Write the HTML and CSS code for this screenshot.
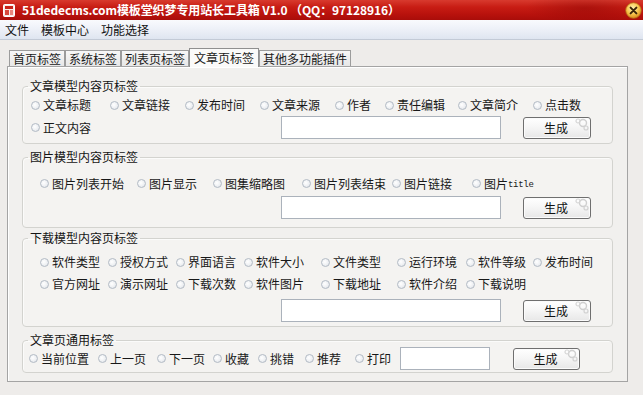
FILE: index.html
```html
<!DOCTYPE html>
<html lang="zh-CN">
<head>
<meta charset="utf-8">
<title>51dedecms.com模板堂织梦专用站长工具箱</title>
<link rel="stylesheet" href="styles.css">
</head>
<body>
<div class="window">
  <div class="titlebar">
    <svg class="app-icon" width="12" height="13" viewBox="0 0 12 13">
      <rect x="0.5" y="0.5" width="11" height="12" rx="1" fill="#fbe9e6" stroke="#ffffff"/>
      <rect x="2" y="2" width="8" height="3" fill="#c8231a"/>
      <rect x="2" y="6" width="4" height="5" fill="#d8473c"/>
      <rect x="7" y="6" width="3" height="5" fill="#e9867d"/>
    </svg>
    <span class="title-text">51dedecms.com模板堂织梦专用站长工具箱 V1.0 （QQ：97128916）</span>
    <svg class="close" width="17" height="17" viewBox="0 0 17 17">
      <defs>
        <radialGradient id="cg" cx="45%" cy="35%" r="65%">
          <stop offset="0" stop-color="#fff3b0"/>
          <stop offset="0.6" stop-color="#f6c24a"/>
          <stop offset="1" stop-color="#d88a1c"/>
        </radialGradient>
      </defs>
      <circle cx="8.5" cy="8.5" r="7.8" fill="url(#cg)" stroke="#b56a14" stroke-width="0.8"/>
      <path d="M5.6 5.6 L11.4 11.4 M11.4 5.6 L5.6 11.4" stroke="#3a2408" stroke-width="2" stroke-linecap="round"/>
    </svg>
  </div>
  <div class="menubar">
    <span class="menu-item">文件</span>
    <span class="menu-item">模板中心</span>
    <span class="menu-item">功能选择</span>
  </div>
  <div class="main">
    <div class="tabs">
      <div class="tab">首页标签</div>
      <div class="tab">系统标签</div>
      <div class="tab">列表页标签</div>
      <div class="tab active">文章页标签</div>
      <div class="tab">其他多功能插件</div>
    </div>
    <div class="panel">
      <fieldset class="group g1">
        <legend>文章模型内容页标签</legend>
        <div class="row r1">
          <label class="radio"><i class="dot"></i>文章标题</label>
          <label class="radio"><i class="dot"></i>文章链接</label>
          <label class="radio"><i class="dot"></i>发布时间</label>
          <label class="radio"><i class="dot"></i>文章来源</label>
          <label class="radio"><i class="dot"></i>作者</label>
          <label class="radio"><i class="dot"></i>责任编辑</label>
          <label class="radio"><i class="dot"></i>文章简介</label>
          <label class="radio"><i class="dot"></i>点击数</label>
        </div>
        <div class="line">
          <div class="cell-first"><label class="radio"><i class="dot"></i>正文内容</label></div>
          <input class="field" type="text">
          <span></span>
          <button class="gen">生成<svg class="swirl" width="16" height="13" viewBox="0 0 16 13"><circle cx="10" cy="5" r="3.5" fill="none" stroke="#cfcfcf" stroke-width="1.4"/><circle cx="5" cy="3" r="2" fill="none" stroke="#d6d6d6" stroke-width="1.2"/><circle cx="13" cy="10" r="2" fill="none" stroke="#d2d2d2" stroke-width="1.2"/></svg></button>
        </div>
      </fieldset>

      <fieldset class="group g2">
        <legend>图片模型内容页标签</legend>
        <div class="row r1">
          <label class="radio"><i class="dot"></i>图片列表开始</label>
          <label class="radio"><i class="dot"></i>图片显示</label>
          <label class="radio"><i class="dot"></i>图集缩略图</label>
          <label class="radio"><i class="dot"></i>图片列表结束</label>
          <label class="radio"><i class="dot"></i>图片链接</label>
          <label class="radio"><i class="dot"></i>图片<span class="mono">title</span></label>
        </div>
        <div class="line">
          <span></span>
          <input class="field" type="text">
          <span></span>
          <button class="gen">生成<svg class="swirl" width="16" height="13" viewBox="0 0 16 13"><circle cx="10" cy="5" r="3.5" fill="none" stroke="#cfcfcf" stroke-width="1.4"/><circle cx="5" cy="3" r="2" fill="none" stroke="#d6d6d6" stroke-width="1.2"/><circle cx="13" cy="10" r="2" fill="none" stroke="#d2d2d2" stroke-width="1.2"/></svg></button>
        </div>
      </fieldset>

      <fieldset class="group g3">
        <legend>下载模型内容页标签</legend>
        <div class="row r1">
          <label class="radio"><i class="dot"></i>软件类型</label>
          <label class="radio"><i class="dot"></i>授权方式</label>
          <label class="radio"><i class="dot"></i>界面语言</label>
          <label class="radio"><i class="dot"></i>软件大小</label>
          <label class="radio"><i class="dot"></i>文件类型</label>
          <label class="radio"><i class="dot"></i>运行环境</label>
          <label class="radio"><i class="dot"></i>软件等级</label>
          <label class="radio"><i class="dot"></i>发布时间</label>
        </div>
        <div class="row r2">
          <label class="radio"><i class="dot"></i>官方网址</label>
          <label class="radio"><i class="dot"></i>演示网址</label>
          <label class="radio"><i class="dot"></i>下载次数</label>
          <label class="radio"><i class="dot"></i>软件图片</label>
          <label class="radio"><i class="dot"></i>下载地址</label>
          <label class="radio"><i class="dot"></i>软件介绍</label>
          <label class="radio"><i class="dot"></i>下载说明</label>
        </div>
        <div class="line">
          <span></span>
          <input class="field" type="text">
          <span></span>
          <button class="gen">生成<svg class="swirl" width="16" height="13" viewBox="0 0 16 13"><circle cx="10" cy="5" r="3.5" fill="none" stroke="#cfcfcf" stroke-width="1.4"/><circle cx="5" cy="3" r="2" fill="none" stroke="#d6d6d6" stroke-width="1.2"/><circle cx="13" cy="10" r="2" fill="none" stroke="#d2d2d2" stroke-width="1.2"/></svg></button>
        </div>
      </fieldset>

      <fieldset class="group g4">
        <legend>文章页通用标签</legend>
        <div class="line">
          <label class="radio"><i class="dot"></i>当前位置</label>
          <label class="radio"><i class="dot"></i>上一页</label>
          <label class="radio"><i class="dot"></i>下一页</label>
          <label class="radio"><i class="dot"></i>收藏</label>
          <label class="radio"><i class="dot"></i>挑错</label>
          <label class="radio"><i class="dot"></i>推荐</label>
          <label class="radio"><i class="dot"></i>打印</label>
          <input class="field" type="text">
          <span></span>
          <button class="gen">生成<svg class="swirl" width="16" height="13" viewBox="0 0 16 13"><circle cx="10" cy="5" r="3.5" fill="none" stroke="#cfcfcf" stroke-width="1.4"/><circle cx="5" cy="3" r="2" fill="none" stroke="#d6d6d6" stroke-width="1.2"/><circle cx="13" cy="10" r="2" fill="none" stroke="#d2d2d2" stroke-width="1.2"/></svg></button>
        </div>
      </fieldset>
    </div>
  </div>
</div>
</body>
</html>
```

FILE: styles.css
```css
html, body {
  margin: 0;
  padding: 0;
}
body {
  width: 643px;
  height: 395px;
  overflow: hidden;
  background: #eeecea;
  font-family: "Noto Sans CJK SC", "Noto Sans", sans-serif;
  font-size: 12px;
  color: #161616;
}
.window {
  width: 643px;
  height: 395px;
  display: flex;
  flex-direction: column;
}

/* title bar */
.titlebar {
  height: 20px;
  flex: none;
  display: flex;
  align-items: center;
  background:
    radial-gradient(ellipse 60px 14px at 585px 8px, rgba(120, 0, 0, 0.35), rgba(120, 0, 0, 0) 100%),
    linear-gradient(#d83a2e 0%, #c81d14 35%, #b9120d 70%, #a90d0a 100%);
  color: #fff;
}
.app-icon {
  margin-left: 3px;
  flex: none;
}
.title-text {
  margin-left: 7px;
  font-weight: bold;
  font-size: 12px;
  line-height: 20px;
  white-space: nowrap;
  letter-spacing: -0.1px;
}
.close {
  margin-left: auto;
  margin-right: 1px;
  flex: none;
}

/* menu bar */
.menubar {
  height: 19px;
  flex: none;
  display: flex;
  align-items: center;
  gap: 12px;
  padding-left: 5px;
  background: linear-gradient(#f9fafd 0%, #eef1f8 45%, #dfe5f0 100%);
  border-bottom: 1px solid #c3cad6;
}
.menu-item {
  line-height: 19px;
  color: #111;
}

/* main area */
.main {
  flex: 1;
  padding: 0 15px 0 7px;
  display: flex;
  flex-direction: column;
}
.tabs {
  height: 27px;
  flex: none;
  display: flex;
  align-items: flex-end;
  padding-left: 2px;
}
.tab {
  height: 17px;
  box-sizing: border-box;
  padding: 0 3px;
  border: 1px solid #9c9c9c;
  border-bottom: none;
  background: linear-gradient(#f7f7f7, #e6e6e6);
  line-height: 15px;
  white-space: nowrap;
  color: #1a1a1a;
}
.tab.active {
  position: relative;
  z-index: 1;
  height: 19px;
  padding: 1px 4px 0;
  background: #fafaf9;
  border-color: #8f8f8f;
}
.panel {
  margin-top: -1px;
  height: 316px;
  box-sizing: border-box;
  border: 1px solid #a4a4a4;
  box-shadow: inset 1px 1px 0 #ffffff;
  background: #f1f0ee;
  padding: 12px 14px 0;
  display: flex;
  flex-direction: column;
}

/* group boxes */
.group {
  margin: 0;
  padding: 0;
  min-width: 0;
  border: 1px solid #d3d3cf;
  border-radius: 4px;
  box-shadow: inset 1px 1px 0 #fbfbfa;
  background: #f4f3f1;
}
.group legend {
  margin-left: 5px;
  padding: 0 2px;
  line-height: 14px;
  font-size: 12px;
  color: #141414;
}
.g1 { padding: 5px 0 4px; }
.g2 { margin-top: 6px; padding: 11px 0 8px; }
.g3 { margin-top: 3px; padding: 10px 0 4px; }
.g4 { margin-top: 6px; padding: 0 0 2px; }

.row {
  display: grid;
  height: 14px;
}
.g1 .r1 {
  padding-left: 8px;
  grid-template-columns: 79px 75px 75px 75px 50px 73px 75px auto;
}
.g2 .r1 {
  padding-left: 17px;
  grid-template-columns: 97px 76px 89px 90px 80px auto;
}
.g3 .row {
  padding-left: 17px;
  grid-template-columns: 68px 68px 68px 77px 76px 69px 67px auto;
}
.g3 .r2 { margin-top: 8px; }

.line {
  display: grid;
  grid-template-columns: 258px 220px 22px 68px;
  height: 23px;
  align-items: center;
}
.g1 .line { margin-top: 4px; }
.g2 .line { margin-top: 7px; }
.g3 .line { margin-top: 8px; }
.g4 .line {
  padding-left: 6px;
  grid-template-columns: 69px 59px 56px 45px 47px 50px 45px 90px 23px 67px;
}
.cell-first {
  padding-left: 8px;
}

.radio {
  display: flex;
  align-items: center;
  white-space: nowrap;
  line-height: 14px;
  color: #181818;
}
.dot {
  width: 9px;
  height: 9px;
  box-sizing: border-box;
  flex: none;
  border-radius: 50%;
  border: 1px solid #b3bbc5;
  background: radial-gradient(circle at 40% 40%, #ffffff 0%, #eef0f3 55%, #d9dde3 100%);
  margin-right: 3px;
}
.mono {
  display: block;
  font-family: "Liberation Mono", monospace;
  font-size: 9px;
  line-height: 14px;
  letter-spacing: -0.3px;
  padding-top: 3px;
}

.field {
  height: 23px;
  width: 100%;
  box-sizing: border-box;
  margin: 0;
  padding: 0 3px;
  border: 1px solid #abb2bb;
  background: #fff;
  outline: none;
}
.gen {
  position: relative;
  height: 22px;
  width: 100%;
  box-sizing: border-box;
  margin: 0;
  padding: 0 2px 0 0;
  border: 1px solid #6f6f6f;
  border-radius: 3px;
  background: linear-gradient(#ffffff 0%, #f6f6f6 45%, #e7e7e7 100%);
  box-shadow: inset 0 0 0 1px #fbfbfb;
  font-family: "Noto Sans CJK SC", sans-serif;
  font-size: 12px;
  line-height: 20px;
  color: #111;
}
.swirl {
  position: absolute;
  top: 0;
  right: 1px;
}
```
